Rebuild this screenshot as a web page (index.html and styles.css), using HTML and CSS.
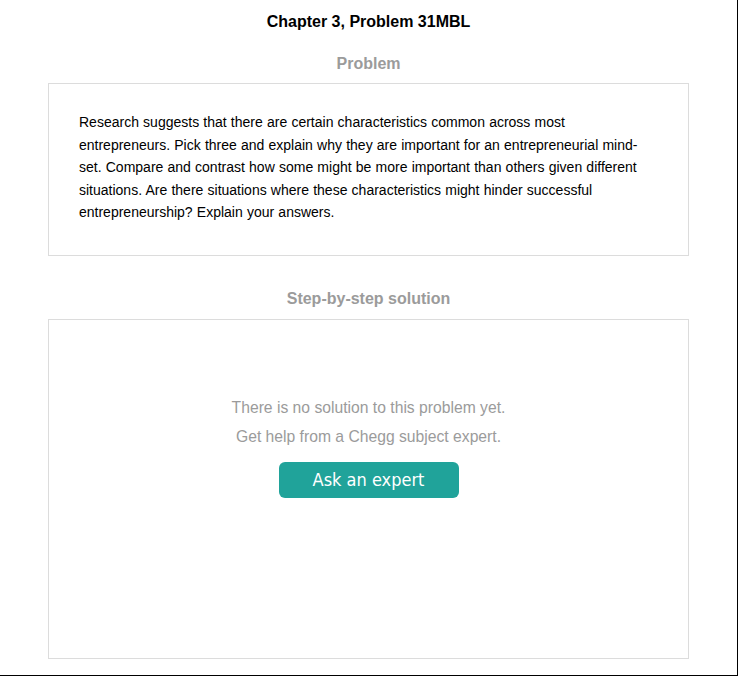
FILE: index.html
```html
<!DOCTYPE html>
<html lang="en">
<head>
<meta charset="utf-8">
<title>Chapter 3, Problem 31MBL</title>
<link rel="stylesheet" href="styles.css">
</head>
<body>
<div class="page">
  <h1 class="title">Chapter 3, Problem 31MBL</h1>
  <h2 class="section-title">Problem</h2>
  <div class="card problem-card">
    <p class="problem-text">Research suggests that there are certain characteristics common across most entrepreneurs. Pick three and explain why they are important for an entrepreneurial mind-set. Compare and contrast how some might be more important than others given different situations. Are there situations where these characteristics might hinder successful entrepreneurship? Explain your answers.</p>
  </div>
  <h2 class="section-title solution-title">Step-by-step solution</h2>
  <div class="card solution-card">
    <p class="empty-text">There is no solution to this problem yet.</p>
    <p class="empty-text">Get help from a Chegg subject expert.</p>
    <button class="ask-btn" type="button">Ask an expert</button>
  </div>
</div>
</body>
</html>
```
FILE: styles.css
```css
html, body {
  margin: 0;
  padding: 0;
  background: #fff;
}

.page {
  box-sizing: border-box;
  width: 738px;
  height: 676px;
  border-right: 1px solid #000;
  border-bottom: 1px solid #000;
  padding: 12px 48px 0 48px;
  font-family: "Liberation Sans", Arial, sans-serif;
  display: flex;
  flex-direction: column;
  overflow: hidden;
}

.title {
  margin: 0;
  font-size: 16px;
  line-height: 20px;
  font-weight: bold;
  color: #000;
  text-align: center;
}

.section-title {
  margin: 22px 0 9px;
  font-size: 16px;
  line-height: 20px;
  font-weight: bold;
  color: #9b9b9b;
  text-align: center;
}

.solution-title {
  margin-top: 33px;
  margin-bottom: 10px;
}

.card {
  box-sizing: border-box;
  border: 1px solid #dcdcdc;
  background: #fff;
}

.problem-card {
  padding: 27px 30px 31px 30px;
}

.problem-text {
  margin: 0;
  max-width: 574px;
  font-size: 14px;
  line-height: 22.5px;
  color: #000;
  word-spacing: 0.3px;
}

.solution-card {
  height: 340px;
  padding-top: 73px;
  display: flex;
  flex-direction: column;
  align-items: center;
}

.empty-text {
  margin: 0;
  font-size: 15.7px;
  line-height: 29px;
  color: #9b9b9b;
  text-align: center;
}

.ask-btn {
  margin-top: 11px;
  width: 180px;
  height: 36px;
  border: none;
  border-radius: 6px;
  background: #20a39a;
  color: #fff;
  font-family: "DejaVu Sans Condensed", "DejaVu Sans", sans-serif;
  font-size: 18px;
  padding: 0 0 1px;
  cursor: pointer;
}
```
